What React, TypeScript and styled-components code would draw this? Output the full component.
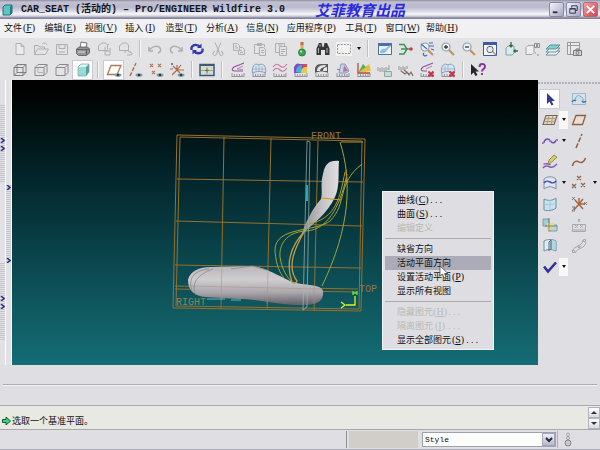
import React from "react";
import styled, { createGlobalStyle, css } from "styled-components";

const cjk = `"Liberation Serif", "Noto Sans CJK SC", serif`;
const mono = `"Liberation Mono", "Noto Sans CJK SC", monospace`;

const GlobalStyle = createGlobalStyle`
  *, *::before, *::after { box-sizing: border-box; }
  body { margin: 0; background: #dedee3; font-family: ${cjk}; font-size: 9px; color: #111; }
  button, select { font: inherit; color: inherit; margin: 0; }
`;

/* ---------- shell ---------- */

const Page = styled.div`
  display: flex;
  flex-direction: column;
  min-height: 100vh;
  background: #dedee3;
  border-bottom: 1px solid #a9a9bb;
`;

const TitleBar = styled.header`
  display: flex;
  align-items: center;
  height: 19px;
  padding: 0 2px 0 2px;
  background: linear-gradient(#8e8e9e 0, #c2c2d2 2px, #b9b9cc 7px, #cfcfdc 10px, #f6f6fa 14px, #d4d4e0 16px, #84849a 18px);
`;

const Title = styled.h1`
  margin: 0 0 0 8px;
  font: bold 10px/16px ${mono};
  color: #15151c;
  white-space: nowrap;
`;

const Brand = styled.span`
  margin-left: 30px;
  font: italic bold 15px/18px "Noto Sans CJK SC", sans-serif;
  color: #2a2ae0;
  white-space: nowrap;
`;

const WindowButtons = styled.div`
  display: flex;
  gap: 2px;
  margin-left: auto;
`;

const WindowButton = styled.button<{ $close?: boolean }>`
  width: 15px;
  height: 15px;
  padding: 0;
  border: 1px solid ${(p) => (p.$close ? "#b96a72" : "#8688a6")};
  border-radius: 2px;
  background: ${(p) =>
    p.$close ? "linear-gradient(135deg, #eda0a0, #cf4650)" : "linear-gradient(135deg, #f4f4fa, #a5a7c4)"};
  svg { display: block; width: 13px; height: 13px; }
`;

const MenuBar = styled.nav`
  background: #f1f1f3;
`;

const MenuItems = styled.div`
  display: flex;
  justify-content: space-between;
  max-width: 460px;
  height: 19px;
  padding: 0 2px 2px 4px;
`;

const MenuButton = styled.button`
  padding: 0;
  border: 0;
  background: none;
  line-height: 15px;
  white-space: nowrap;
`;

const Key = styled.span`
  display: inline-block;
  width: 14px;
  font-size: 10px;
  text-align: center;
`;

const Dots = styled.span`
  font: 8px ${mono};
`;

const ToolRow = styled.div`
  display: flex;
  align-items: center;
  height: 21px;
  padding-left: 9px;
  background: #e3e3e5;
`;

const ToolButton = styled.button<{ $on?: boolean; $dim?: boolean }>`
  display: flex;
  flex: none;
  align-items: center;
  justify-content: center;
  width: 21px;
  height: 20px;
  padding: 0;
  border: 0;
  background: none;
  svg { width: 16px; height: 16px; opacity: ${(p) => (p.$dim ? 0.6 : 0.88)}; }
  ${(p) => p.$on && css`background: #fff; box-shadow: inset 0 0 0 1px #c9c9d3;`}
`;

const Separator = styled.span<{ $w: number }>`
  flex: none;
  width: ${(p) => p.$w}px;
  height: 17px;
  background: linear-gradient(90deg, #c0c0c4 1px, #f7f7f7 1px, #f7f7f7 2px, transparent 2px) no-repeat 4px 0;
`;

const CaretButton = styled.button<{ $raised?: boolean }>`
  display: flex;
  flex: none;
  align-items: center;
  justify-content: center;
  width: 9px;
  height: 18px;
  padding: 0;
  border: 0;
  background: ${(p) => (p.$raised ? "#f7f7f5" : "none")};
  &::before {
    content: "";
    border: 2px solid transparent;
    border-top: 3px solid #111;
    border-bottom: 0;
  }
`;

/* ---------- work area ---------- */

const WorkArea = styled.main`
  display: flex;
  flex: 1 0 285px;
`;

const SashColumn = styled.div<{ $top: number }>`
  display: flex;
  flex-direction: column;
  gap: 80px;
  width: 6px;
  padding-top: ${(p) => p.$top}px;
  border-right: 1px solid #fbfbfd;
  background: #e1e1e6;
`;

const Sash = styled.button<{ $ends?: boolean }>`
  display: flex;
  flex-direction: column;
  align-items: center;
  justify-content: ${(p) => (p.$ends ? "space-between" : "center")};
  gap: 3px;
  width: 5px;
  height: 78px;
  padding: 0;
  border: 0;
  background: repeating-linear-gradient(#c2c2c8 0, #c2c2c8 1px, #e4e4e8 1px, #e4e4e8 2px);
  svg { width: 5px; height: 5px; }
`;

const Viewport = styled.section`
  position: relative;
  flex: 1;
  min-width: 0;
  background: linear-gradient(#000 0, #000604 7%, #02242a 33%, #0a454c 62%, #156d75 100%);
`;

const Model = styled.svg`
  display: block;
  width: 100%;
  height: 285px;
`;

const ContextMenu = styled.ul`
  position: absolute;
  top: 111px;
  left: 370px;
  width: 112px;
  margin: 0;
  padding: 1px 2px 2px;
  border: 1px solid #f3f3f6;
  background: #dedee2;
  list-style: none;
`;

const ContextItem = styled.button<{ $hot?: boolean }>`
  display: block;
  width: 100%;
  height: 14px;
  padding: 0 0 0 12px;
  border: 0;
  background: ${(p) => (p.$hot ? "#acacb9" : "none")};
  line-height: 14px;
  text-align: left;
  white-space: nowrap;
  &:disabled { color: #b9b9b2; }
`;

const ContextRule = styled.li`
  height: 1px;
  margin: 3px 0;
  background: #a9a9b0;
`;

const Pointer = styled.svg`
  position: absolute;
  top: 73px;
  left: 56px;
  width: 10px;
  height: 14px;
`;

const Palette = styled.aside`
  display: grid;
  grid-template-columns: 20px 9px 22px 9px;
  grid-auto-rows: 21px;
  align-content: start;
  align-items: center;
  width: 62px;
  padding: 8px 0 0 1px;
  background: radial-gradient(circle at 1px 1px, #b3b3bb 1px, transparent 1px) 0 2px / 3px 3px repeat-x #dedee3;
`;

const PaletteGap = styled.span``;

/* ---------- footer ---------- */

const Strip = styled.div`
  height: 41px;
  padding: 19px 3px 0;
  border-bottom: 1px solid #a8a8ae;
  &::before {
    content: "";
    display: block;
    height: 2px;
    border-top: 1px solid #adadb4;
    background: #f3f3f6;
  }
`;

const MessageRow = styled.div`
  display: flex;
  height: 24px;
  border-bottom: 1px solid #a8a8ae;
  background: #e8e9e3;
`;

const Message = styled.output`
  display: flex;
  flex: 1;
  align-items: center;
  padding: 7px 0 0 2px;
  font-size: 9px;
  line-height: 14px;
  svg { width: 9px; height: 10px; margin-right: 1px; }
`;

const Scroller = styled.div`
  display: flex;
  flex-direction: column;
  width: 12px;
  padding-top: 1px;
`;

const ScrollButton = styled.button<{ $up?: boolean }>`
  display: flex;
  align-items: center;
  justify-content: center;
  height: 11px;
  padding: 0;
  border: 1px solid #b3b3bf;
  background: linear-gradient(#fff, #d8d8e0);
  &::before {
    content: "";
    border: 3px solid transparent;
    ${(p) => (p.$up ? "border-bottom-color: #333; border-top: 0;" : "border-top-color: #333; border-bottom: 0;")}
  }
`;

const StatusRow = styled.footer`
  display: flex;
  height: 19px;
  padding: 1px 22px 1px 0;
`;

const StatusText = styled.div`
  flex: 1;
  border-right: 1px solid #8f8f98;
`;

const StatusBlock = styled.div`
  width: 69px;
  margin: 0 4px 0 2px;
  background: #d1cec9;
`;

const FilterBox = styled.label`
  position: relative;
  display: flex;
  width: 136px;
  padding: 1px 0;
  border-right: 1px solid #b0b0b8;
  select {
    flex: 1;
    width: 134px;
    margin-right: 1px;
    padding: 0 0 0 2px;
    appearance: none;
    border: 1px solid #9fa0ae;
    border-radius: 0;
    background: #fbfdfb;
    font: 8px/12px ${mono};
  }
`;

const FilterArrow = styled.span`
  position: absolute;
  top: 2px;
  right: 2px;
  display: flex;
  align-items: center;
  justify-content: center;
  width: 13px;
  height: 13px;
  border: 1px solid #a5a7bd;
  background: linear-gradient(#eeeef5, #b7b8cb);
  pointer-events: none;
  svg { width: 8px; height: 6px; }
`;

const Lamp = styled.svg`
  width: 8px;
  height: 15px;
  margin: 1px 6px 0 6px;
`;

/* ---------- icons, drawn on a 16 x 16 grid ---------- */

const G = "#8d8d91";
const ruler = <path d="M1.500 14.500h13M2 14v-3M4.500 14v-2M7 14v-2M9.500 14v-2M12 14v-2M14 14v-3" stroke="#8c8c92" fill="none" />;
const eye = (
  <g>
    <ellipse cx="12" cy="13" rx="3.5" ry="1.8" fill="#71969c" />
    <circle cx="12" cy="13" r="1.3" fill="#123" />
  </g>
);
const lens = (
  <g>
    <path d="M9 9l5 5" stroke="#c08a4c" strokeWidth="2.2" />
    <circle cx="6" cy="6" r="4" fill="#eef5fb" stroke="#8a94a2" strokeWidth="1.2" />
  </g>
);
const redX = <path d="M9.500 9.500l5 5M14.500 9.500l-5 5" stroke="#c2182c" strokeWidth="1.800" />;

const icons: Record<string, React.ReactNode> = {
  new: <path d="M4 2.5h5l3 3v8H4zM9 2.5v3h3" fill="#f2f2f4" stroke={G} />,
  open: <path d="M1.5 13.500V4.500h4l1 1.500h5v2M1.500 13.500l3-5.500h11l-3 5.500zM9 3c2-2 4-1 5 1" fill="none" stroke={G} />,
  save: <path d="M2.500 3.500h11v10h-11zM5 3.500v4h6v-4M5 11h6" fill="none" stroke={G} />,
  print: (
    <g stroke="#444" strokeWidth=".8">
      <path d="M5 7l1-6 6 1-1 5z" fill="#fff" />
      <path d="M1.500 8l3-2h8l2 2v4l-3 2.500h-8l-2-2z" fill="#8b8b90" />
      <path d="M2 8.500h9.500v5M11.500 8.500l3-.5" fill="none" />
      <path d="M3 11h7" stroke="#eee" />
    </g>
  ),
  mail: <path d="M2.500 9.500V5l3-3h4l2 2v5.500zM9 6v8h5V7M9 10h5M11 4l2-1" fill="none" stroke={G} />,
  link: <path d="M2.500 9.500V5l3-3h4l2 2v5.500zM8 12a2 2 0 0 1 4-1h2M10 14h3a2 1.500 0 0 0 0-3" fill="none" stroke={G} />,
  undo: <path d="M2 6v4h4M2.500 9.500C5 4.500 12 4 13.500 8c.7 2-.8 3.500-2.500 4" fill="none" stroke={G} strokeWidth="1.500" />,
  redo: <path d="M14 6v4h-4M13.500 9.500C11 4.500 4 4 2.500 8c-.7 2 .8 3.500 2.500 4" fill="none" stroke={G} strokeWidth="1.500" />,
  regen: (
    <g fill="none" stroke="#1a21a8" strokeWidth="2.300">
      <path d="M2.500 9V6.500C4 3 9 3 11 6M13.500 7.500V10C12 13 7 13 5 10" />
      <path d="M12.500 2.500V7H8zM3.500 13.500V9H8z" fill="#1a21a8" stroke="none" />
    </g>
  ),
  cut: <path d="M5 1.500l4 9M11 1.500l-4 9M5 10.500a1.800 2 0 1 0 1.500 2.500l1-3M11 10.500a1.800 2 0 1 1-1.500 2.500l-1-3" fill="none" stroke={G} />,
  copy: <path d="M2.500 2.500h4l2 2v5h-6zM8.500 6.500h3l2 2v5h-6v-4M4 5h2M4 7h3M9 9.500h2M9 11.500h3" fill="none" stroke={G} />,
  paste: <path d="M7 12.500H2.500v-9h10V6M5.500 4.500v-2h4v2zM7.500 6.500h4l2 2v6h-6zM9 9.500h3M9 11.500h3" fill="none" stroke={G} />,
  pasteSp: <path d="M6 11.500H2.500v-9h9V5M5 4h4M6.500 5.500h7v9h-7zM8 8.500h4M8 10.500h4M8 12.500h2" fill="none" stroke={G} />,
  lamp: (
    <g>
      <path d="M6.500 1h3v9h-3z" fill="#d8a65d" />
      <path d="M6.500 1h3v3h-3z" fill="#c85a28" />
      <circle cx="8" cy="11.500" r="3.500" fill="#22a03d" stroke="#127027" />
      <circle cx="7" cy="10.500" r="1.100" fill="#b2f0b8" />
    </g>
  ),
  find: (
    <g>
      <path d="M1.500 14V7.500L4 2h2.500l1 4h1l1-4H12l2.500 5.500V14H10V9H6v5z" fill="#202023" />
      <path d="M3.500 7v5M12 7v5M5 3.500v2" stroke="#a5b3a8" />
    </g>
  ),
  select: (
    <g>
      <path d="M0 1h16v14H0z" fill="#f5f5f3" />
      <path d="M1.500 3.500h13v9h-13z" fill="none" stroke="#8c8c91" strokeDasharray="2 1.200" />
    </g>
  ),
  repaint: (
    <g>
      <path d="M1.500 2.500h13v11h-13z" fill="#f4f8fc" stroke="#2c64a8" />
      <path d="M1 2h14v3H1z" fill="#2f63ac" />
      <path d="M3 12c0-3 2-5 5-4l5-4 1 1-4 4c0 2-3 4-7 3z" fill="#88bce0" />
    </g>
  ),
  spin: (
    <g fill="none">
      <path d="M1 3.500h5l3 4.500-3 5H1M3 8h6" stroke="#238b46" strokeWidth="1.500" />
      <path d="M9 8h4" stroke="#333" />
      <circle cx="13" cy="8" r="1.800" fill="#d3252d" />
    </g>
  ),
  orient: (
    <g>
      {lens}
      <path d="M10 2h4M10 5h5M12 8l3 1M5 12c-2 2 1 4 3 2M2 3l6 5" stroke="#2b58b8" strokeWidth="1.200" fill="none" />
    </g>
  ),
  zoomIn: <g>{lens}<path d="M4 6h4M6 4v4" stroke="#222" strokeWidth="1.300" /></g>,
  zoomOut: <g>{lens}<path d="M4 6h4" stroke="#222" strokeWidth="1.300" /></g>,
  refit: (
    <g>
      <path d="M1.500 1.500h13v13h-13z" fill="#f4f8f8" stroke="#264a96" />
      <path d="M1 1h14v3H1z" fill="#264a96" />
      <path d="M10 10l4 4" stroke="#c08a4c" strokeWidth="1.600" />
      <circle cx="8" cy="8.500" r="3.200" fill="#e4f0f4" stroke="#556" />
    </g>
  ),
  reorient: (
    <g>
      <path d="M3 7l2-2h6v7l-2 2H3z" fill="#d6efec" stroke="#7a9c98" />
      <path d="M8 1v5M6.500 4L8 6l1.500-2M15 10h-4M12.500 8.500L11 10l1.500 1.500" stroke="#175e35" strokeWidth="1.300" fill="none" />
    </g>
  ),
  views: (
    <g fill="none">
      <path d="M2 6.500l2-2h6v7l-2 2H2z" fill="#eef2f0" stroke="#9a9a9e" />
      <path d="M10.500 2.500h2v4h-2zM13.500 2.500h2v4h-2zM11 12h1M13 14h2" stroke="#6c6c71" strokeWidth=".8" />
    </g>
  ),
  layers: (
    <g stroke="#4b7d84" strokeWidth=".9">
      <path d="M1 14l4-4h10l-4 4z" fill="#f4f4f0" />
      <path d="M1 11l4-4h10l-4 4z" fill="#f0f4f0" />
      <path d="M1 8l4-4h10l-4 4z" fill="#6fd0d4" />
    </g>
  ),
  viewMgr: (
    <g fill="none" stroke="#68686d">
      <path d="M1.500 1.500h12v12h-12zM4.500 1.500v12M1.500 4.500h12" fill="#ececee" stroke="#8f8f94" />
      <path d="M7.500 9.500h8v5h-8zM10 9v-1h3v1" fill="#d6d6da" />
      <circle cx="11.500" cy="12" r="1.500" />
    </g>
  ),
  wire: <path d="M2 5.500l3-3h9v8l-3 3H2zM2 5.500h9v8M11 5.500l3-3M5 2.500v8h9M5 10.500l-3 3" fill="none" stroke="#707074" />,
  hidden: (
    <g fill="none" stroke="#808084">
      <path d="M2 5.500l3-3h9v8l-3 3H2zM2 5.500h9v8M11 5.500l3-3" />
      <path d="M5 6v4.500h5" stroke="#b0b0b4" />
    </g>
  ),
  noHidden: <path d="M2 5.500l3-3h9v8l-3 3H2zM2 5.500h9v8M11 5.500l3-3" fill="none" stroke="#808084" />,
  shaded: (
    <g>
      <path d="M3 5l3-3h8l-3 3z" fill="#d7f3f0" />
      <path d="M3 5h8v9H3z" fill="#8fd6d2" />
      <path d="M11 5l3-3v8l-3 4z" fill="#3b9493" />
      <path d="M3 5l3-3h8v8l-3 4H3z" fill="none" stroke="#5b9998" strokeWidth=".7" />
    </g>
  ),
  planeEye: <g><path d="M1.500 12.500L5 3.500h10l-4 9z" fill="none" stroke="#a1673f" strokeWidth="1.300" />{eye}</g>,
  axisEye: <g><path d="M3 14L9 1" stroke="#b0592f" strokeWidth="1.400" strokeDasharray="4 1.500" />{eye}</g>,
  pointEye: (
    <g>
      <path d="M2 2l3 3M5 2L2 5M10 2l3 3M13 2l-3 3M4 9l3 3M7 9l-3 3" stroke="#b0694c" strokeWidth="1.200" />
      {eye}
    </g>
  ),
  csysEye: (
    <g>
      <path d="M8 8V3M8 8l-5 5M8 8h7M4 4l7 7M12 3L8 8" stroke="#a55d34" strokeWidth="1.200" />
      <path d="M2 1l2 2M4 1L2 3M1 7h3" stroke="#555" strokeWidth=".8" />
      {eye}
    </g>
  ),
  grid: (
    <g>
      <path d="M1 2.500h14v11H1z" fill="#d3dcc6" stroke="#27476c" strokeWidth="1.500" />
      <path d="M1 3h14" stroke="#27476c" strokeWidth="2" />
      <path d="M8 5v8M2 8.500h12" stroke="#8fa08c" />
      <path d="M6 8.500h4M8 6.500v4" stroke="#4c6a4d" />
    </g>
  ),
  curvature: (
    <g>
      {ruler}
      <path d="M14 1L4 5c-3 2-2 4 1 4h8" stroke="#8a3a9c" fill="none" strokeWidth="1.100" />
      <path d="M13 4L7 7l6 .5" stroke="#b06e9c" fill="none" strokeWidth=".9" />
    </g>
  ),
  section: (
    <g>
      {ruler}
      <path d="M1.500 11c-1-9 4-10 6.500-8 2-2 8-1 6.500 8-4-2-9-2-13 0z" fill="#d6e4f0" stroke="#7c98b8" />
      <path d="M5 4v6M11 4v6M8 3v6M2 7h12" stroke="#90a8c4" strokeWidth=".8" />
    </g>
  ),
  offset: (
    <g>
      {ruler}
      <path d="M1 5c3-4 5-3 7-1s4 2 7-2M1 9c3-4 5-3 7-1s4 2 7-2" stroke="#c06aa2" fill="none" strokeWidth="1.100" />
    </g>
  ),
  gauss: (
    <g>
      {ruler}
      <path d="M1 11V5c2-4 4-4 6-3h7v9z" fill="#7a35b8" />
      <path d="M3 10c0-5 3-7 6-7l-1 8z" fill="#2da9de" />
      <path d="M8 11c0-5 2-6 6-6v6z" fill="#e9c72c" />
      <path d="M9 2h5v3c-2 0-4 0-5-3z" fill="#da3a3a" />
    </g>
  ),
  reflect: (
    <g>
      {ruler}
      <path d="M1 11V6c2-5 5-4 13-4v9c-4-2-9-2-13 0z" fill="#48484c" />
      <path d="M3 9c0-5 4-6 9-6-2 4-5 1-6 6zM9 9c0-3 2-4 4-4v4z" fill="#e6e6ea" />
    </g>
  ),
  draft: (
    <g>
      {ruler}
      <path d="M4 11l2-9h4l4 7-3 2z" fill="#c6d4ea" stroke="#6a79a8" strokeWidth=".8" />
      <path d="M8 10l1-7 4 6z" fill="#b9648c" />
      <path d="M2 7l3 1" stroke="#4670b4" />
    </g>
  ),
  slope: (
    <g>
      {ruler}
      <path d="M2 11L13 2l2 7z" fill="#e8b82c" />
      <path d="M2 11l5-9 3 3z" fill="#41a85a" />
      <path d="M2 1v10h12" stroke="#b8342c" strokeWidth="1.300" fill="none" />
    </g>
  ),
  dihedral: (
    <g fill="none" stroke="#8c8c91">
      <path d="M1 5v4M3 6v4M5 5v5M7 6v4M9 5v4M11 6v2" />
      <path d="M7.500 9.500h7v5h-7zM12 3v5" fill="#c4dcd4" stroke="#82a096" />
    </g>
  ),
  distance: (
    <g>
      <path d="M1 4v4M3 5v4M5 4v4M7 5v3M9 4v3" stroke="#8c8c92" />
      <path d="M3 9l4 3 2-2 2 3 2-3 2 4M6 8l5 4" stroke="#6c5a52" strokeWidth="1.100" fill="none" />
    </g>
  ),
  delCurv: (
    <g>
      {ruler}
      <path d="M14 1L4 5c-3 2-2 4 1 4h3" stroke="#8a3a9c" fill="none" strokeWidth="1.100" />
      <path d="M13 4L7 7" stroke="#b06e9c" />
      {redX}
    </g>
  ),
  delSect: (
    <g>
      {ruler}
      <path d="M1.500 11c-1-9 4-10 6.500-8 2-2 8-1 6.500 8-4-2-9-2-13 0z" fill="#d6e4f0" stroke="#7c98b8" />
      <path d="M5 4v6M8 3v6M2 7h12" stroke="#90a8c4" strokeWidth=".8" />
      {redX}
    </g>
  ),
  help: (
    <g>
      <path d="M1 2v11l2.500-2.500L5.500 14l2-1-2-3.500H9z" fill="#0d0d14" />
      <path d="M9.500 5c0-4 5.500-4 5.500-.5C15 7 12 7 12 9.500M12 11v2" stroke="#7d1f93" strokeWidth="2" fill="none" />
    </g>
  ),
  arrow: <path d="M5 2v11l2.500-2.500L9.500 14.500l2-1-2-3.500H13z" fill="#1b1c86" />,
  internal: (
    <g fill="none">
      <path d="M1.500 2.500h13v11h-13z" stroke="#3f8bc4" strokeDasharray="1 1" />
      <path d="M4 10c0-5 3-6 5-5s4 3 3 5" fill="#c4def0" stroke="#6aa4cc" />
      <path d="M1 11c1-2 3-2 4-1M11 10c1 2 3 1 4 0" stroke="#236aa8" strokeWidth="1.500" />
    </g>
  ),
  activePlane: (
    <g fill="none">
      <path d="M1 12.500L4 3.500h11l-3 9z" fill="#e4d8b8" stroke="#6a5a48" strokeWidth="1.200" />
      <path d="M3 9.500h10M4 6.500h10M7 4L5 12M11 4L9 12" stroke="#a09478" />
    </g>
  ),
  plane: <path d="M1.500 12.500L5 3.500h9.500l-3 9z" fill="#eadfd4" stroke="#85522f" strokeWidth="1.300" />,
  curve: (
    <g>
      <path d="M1.500 10c2-5 5-5 7-2s4 2 6-1" stroke="#5a3fb0" strokeWidth="1.500" fill="none" />
      <path d="M0 9h2v2H0zM7 7h2v2H7zM14 6h2v2h-2z" fill="#a46ac0" />
    </g>
  ),
  axis: <path d="M5 15L11 1" stroke="#85522f" strokeWidth="1.500" strokeDasharray="5 1.500" />,
  editCurve: (
    <g>
      <path d="M1.500 10c2 0 5-1 7 1M1 14c2-3 5-2 7-1s4 0 7-3" stroke="#7a4ab0" strokeWidth="1.400" fill="none" />
      <path d="M6 10L7 6l5-5 3 2-5 5z" fill="#d2cc44" stroke="#74743c" strokeWidth=".8" />
    </g>
  ),
  datumCurve: <path d="M1.500 12c1-6 5-5 6.500-4s5 1 6.500-4" stroke="#85522f" strokeWidth="1.500" fill="none" />,
  cos: (
    <g fill="none">
      <path d="M2 4c4-3 8-3 12 0v10c-4-3-8-3-12 0z" fill="#dce9f2" stroke="#6f8799" />
      <path d="M2 8c2-3 4-2 6-1s4 2 6-1" stroke="#3a2fae" strokeWidth="1.500" />
    </g>
  ),
  points: <path d="M6 1l4 4M10 1L6 5M1 9l4 4M5 9l-4 4M10 8l4 4M14 8l-4 4" stroke="#85522f" strokeWidth="1.200" />,
  surface: (
    <g fill="none">
      <path d="M2 3c4 2 8 2 12-1v10c-4 3-8 3-12 2z" fill="#c4e4f2" stroke="#5f8299" />
      <path d="M8 4v10M2 8c4 1 8 1 12-1" stroke="#9cc8dc" />
    </g>
  ),
  csys: (
    <g>
      <path d="M8 8V2M8 8h6M8 8l-5 6M4 4l8 9M12 3L8 8" stroke="#a05326" strokeWidth="1.400" />
      <path d="M1 1l3 3M4 1L1 4M13 6l3 3M16 6l-3 3M1 11h3l-3 4h3" stroke="#555" strokeWidth=".8" fill="none" />
    </g>
  ),
  connect: (
    <g>
      <path d="M1 2h6v7H1z" fill="#9dc8dc" stroke="#5f8299" strokeWidth=".8" />
      <path d="M8 8h7v6H8z" fill="#b3d2dc" stroke="#5f8299" strokeWidth=".8" />
      <path d="M5 6h7v3H9v4H5z" fill="#e5df74" />
      <path d="M7 1v14M3 9h12" stroke="#666b4c" strokeWidth=".8" />
    </g>
  ),
  analysis: (
    <g fill="none" stroke="#a2a2a6">
      <path d="M1.500 14.500v-7h13v7zM3 14v-2M5 14v-2M7 14v-2M9 14v-2M11 14v-2M13 14v-2" />
      <path d="M7 2l2 3M9 2L7 5M4 8l3 3M7 8l-3 3M9 8l3 3M12 8l-3 3" />
    </g>
  ),
  trim: (
    <g fill="none">
      <path d="M2 3c4-2 8-2 12 0v10c-4-2-8-2-12 0z" fill="#e7eff2" stroke="#5f8299" />
      <path d="M8 2c2 0 4 .3 5.500 1.200v9C12 11.500 10 11 8 11.500z" fill="#a9d4e8" />
      <path d="M7 13V4l2-2v10" stroke="#36506c" />
    </g>
  ),
  chain: (
    <g fill="none" stroke="#a0a0a4">
      <path d="M1 13c3-6 10-4 11-11M4 15c3-6 10-4 11-11" />
      <path d="M1.500 12.500h2v2h-2zM7 7.500h2v2H7zM12.500 1.500h2v2h-2z" />
    </g>
  ),
  check: <path d="M2 7.500l4 5 8-9" stroke="#1c1a8c" strokeWidth="2.600" fill="none" />,
};

const Icon = ({ name }: { name: string }) => (
  <svg viewBox="0 0 16 16" aria-hidden="true">{icons[name]}</svg>
);

/* ---------- data ---------- */

const menus: [string, string][] = [
  ["文件", "F"], ["编辑", "E"], ["视图", "V"], ["插入", "I"], ["造型", "T"], ["分析", "A"],
  ["信息", "N"], ["应用程序", "P"], ["工具", "T"], ["窗口", "W"], ["帮助", "H"],
];

type Tool = { id: string; on?: boolean; dim?: boolean } | { gap: number } | { caret: true };
const t = (ids: string, extra = {}): Tool[] => ids.split(" ").map((id) => ({ id, ...extra }));

const fileTools: Tool[] = [
  ...t("new open save", { dim: true }), ...t("print"), ...t("mail link", { dim: true }), { gap: 9 },
  ...t("undo redo", { dim: true }), ...t("regen"), ...t("cut copy paste pasteSp", { dim: true }),
  ...t("lamp find select"), { caret: true }, { gap: 11 },
  ...t("repaint spin orient zoomIn zoomOut refit reorient views layers viewMgr"),
];

const viewTools: Tool[] = [
  ...t("wire hidden noHidden"), ...t("shaded", { on: true }), { gap: 10 },
  ...t("planeEye", { on: true }), ...t("axisEye pointEye csysEye"), { gap: 9 },
  ...t("grid"), { gap: 10 },
  ...t("curvature section offset gauss reflect draft slope dihedral distance delCurv delSect"), { gap: 9 },
  ...t("help"),
];

type PaletteRow = { left: string; leftCaret?: "flat" | "raised"; right?: string; rightCaret?: boolean };
const paletteRows: PaletteRow[] = [
  { left: "arrow", right: "internal" },
  { left: "activePlane", leftCaret: "raised", right: "plane" },
  { left: "curve", leftCaret: "flat", right: "axis" },
  { left: "editCurve", right: "datumCurve" },
  { left: "cos", leftCaret: "flat", right: "points", rightCaret: true },
  { left: "surface", right: "csys" },
  { left: "connect", right: "analysis" },
  { left: "trim", right: "chain" },
  { left: "check", leftCaret: "raised" },
];

type Entry = { label: string; k?: string; dots?: boolean; off?: boolean; hot?: boolean } | null;
const contextEntries: Entry[] = [
  { label: "曲线", k: "C", dots: true },
  { label: "曲面", k: "S", dots: true },
  { label: "编辑定义", off: true },
  null,
  { label: "缺省方向" },
  { label: "活动平面方向", hot: true },
  { label: "设置活动平面", k: "P" },
  { label: "显示所有视图" },
  null,
  { label: "隐藏图元", k: "H", dots: true, off: true },
  { label: "隔离图元", k: "I", dots: true, off: true },
  { label: "显示全部图元", k: "S", dots: true },
];

/* ---------- parts ---------- */

const Mnemonic = ({ k }: { k: string }) => <Key>(<u>{k}</u>)</Key>;

const Tools = ({ items, label }: { items: Tool[]; label: string }) => (
  <ToolRow role="toolbar" aria-label={label}>
    {items.map((item, i) =>
      "gap" in item ? (
        <Separator key={i} $w={item.gap} />
      ) : "caret" in item ? (
        <CaretButton key={i} aria-label="more" />
      ) : (
        <ToolButton key={i} $on={item.on} $dim={item.dim} aria-label={item.id}>
          <Icon name={item.id} />
        </ToolButton>
      )
    )}
  </ToolRow>
);

const Chevron = () => (
  <svg viewBox="0 0 5 5" aria-hidden="true"><path d="M1 0l3 2.500L1 5" fill="none" stroke="#2b2b8c" strokeWidth="1.500" /></svg>
);

const SeatModel = () => (
  <Model viewBox="12 80 526 285" role="img" aria-label="CAR_SEAT">
    <defs>
      <linearGradient id="cushion" x1="0" y1="0" x2="0" y2="1">
        <stop offset="0" stopColor="#b9b5b9" />
        <stop offset=".35" stopColor="#d0cdd1" />
        <stop offset=".68" stopColor="#aaa6ac" />
        <stop offset="1" stopColor="#605e66" />
      </linearGradient>
      <linearGradient id="back" x1="0" y1="0" x2="1" y2="0">
        <stop offset="0" stopColor="#8b878b" />
        <stop offset=".55" stopColor="#c6c3c7" />
        <stop offset="1" stopColor="#e1dfe2" />
      </linearGradient>
    </defs>
    <g fill="none" stroke="#96702f" strokeWidth="1">
      <path d="M177 135L365 139L361 311L173 308ZM180 137L362 141L359 309L176 306Z" />
      <path d="M224 137L221 309M271 138L267 310M318 141L314 311" />
      <path d="M177 179L363 182M176 221L362 226M175 265L361 268M175 286L358 289M175 289L357 292" />
    </g>
    <path
      d="M188 280C190 271 199 267 211 267L252 266C266 268 277 275 290 281C300 286 321 283 323 291C324 300 319 305 305 305C282 306 262 299 238 299L205 297C195 296 188 291 188 280Z"
      fill="url(#cushion)"
    />
    <path d="M192 291C187 277 196 270 209 269M196 295C190 284 198 274 213 269M231 269L252 266L267 270" fill="none" stroke="#8b868c" strokeWidth=".8" />
    <path d="M339 161C329 160 325 164 323 174C320 184 323 192 321 199C312 209 306 222 301 235C312 225 328 213 335 197C340 187 338 172 339 161Z" fill="url(#back)" />
    <path d="M222 268L221 299M268 272L267 304M314 286L314 304M190 286L321 289" stroke="#a8947a" strokeWidth=".8" opacity=".65" />
    <g fill="none" stroke="#a3a536" strokeWidth="1">
      <path d="M340 142C352 180 351 226 322 286" />
      <path d="M362 164C336 184 348 203 330 221C317 232 275 226 275 250C276 268 282 276 285 279" />
      <path d="M347 174C342 200 330 230 306 231C285 232 279 246 280 257C282 270 287 277 292 282" />
      <path d="M345 172C340 196 337 219 308 224" stroke="#b39a28" />
    </g>
    <path d="M304 232C292 245 285 262 292 282C293 284 297 283 297 281C286 266 295 248 305 230" fill="none" stroke="#c49c45" strokeWidth="1.300" />
    <path d="M322 198L341 200" stroke="#d6942a" />
    <g fill="none" stroke="#9db7b8" strokeWidth=".9" opacity=".8">
      <path d="M307 141L303 310M310 142L307 307M303 310L307 307M307 141L310 142" />
    </g>
    <path d="M306 185h2v16h-2z" fill="#25aab5" />
    <path d="M341 142L363 142M346 170L347 183" stroke="#b88f32" />
    <g fill="none" stroke="#d6f52d" strokeWidth="1.300">
      <path d="M346 305h9v-9M341 302l4 3-4 3" />
      <path d="M353 291v4M357 291v4M353 293h4" stroke="#5ff03f" />
    </g>
    <path d="M207 299h18M231 300h10" stroke="#58b9cf" />
    <g fill="#96763e" fontFamily='"Liberation Mono", monospace' fontSize="10">
      <text x="311" y="139">FRONT</text>
      <text x="176" y="305" fill="#8b8358">RIGHT</text>
      <text x="359" y="292">TOP</text>
    </g>
  </Model>
);

export default function App() {
  return (
    <>
      <GlobalStyle />
      <Page lang="zh-CN">
        <TitleBar>
          <svg width="11" height="12" viewBox="0 0 11 12" aria-hidden="true">
            <path d="M1 3l2-2h7v8l-2 2H1z" fill="#5cc5c3" stroke="#2b6f78" />
            <path d="M8 3l2-2v8l-2 2z" fill="#237c80" />
          </svg>
          <Title>CAR_SEAT (活动的) – Pro/ENGINEER Wildfire 3.0</Title>
          <Brand>艾菲教育出品</Brand>
          <WindowButtons>
            <WindowButton aria-label="minimize">
              <svg viewBox="0 0 14 14"><path d="M3 10h5" stroke="#333348" strokeWidth="2" /></svg>
            </WindowButton>
            <WindowButton aria-label="restore">
              <svg viewBox="0 0 14 14"><path d="M5 5V3h6v5H9M3 6h6v5H3zM3 6.500h6" fill="none" stroke="#333348" /></svg>
            </WindowButton>
            <WindowButton $close aria-label="close">
              <svg viewBox="0 0 14 14"><path d="M3 3l8 8M11 3l-8 8" stroke="#fff" strokeWidth="2" /></svg>
            </WindowButton>
          </WindowButtons>
        </TitleBar>

        <MenuBar>
          <MenuItems>
            {menus.map(([label, k]) => (
              <MenuButton key={label}>{label}<Mnemonic k={k} /></MenuButton>
            ))}
          </MenuItems>
        </MenuBar>
        <Tools items={fileTools} label="file" />
        <Tools items={viewTools} label="view" />

        <WorkArea>
          <SashColumn $top={25}>
            <Sash aria-label="panel"><Chevron /><Chevron /></Sash>
            <Sash aria-label="panel"><Chevron /><Chevron /></Sash>
          </SashColumn>
          <SashColumn $top={105}>
            <Sash $ends aria-label="panel"><Chevron /><Chevron /></Sash>
          </SashColumn>
          <Viewport>
            <SeatModel />
            <ContextMenu role="menu">
              {contextEntries.map((e, i) =>
                e ? (
                  <li key={i} role="none">
                    <ContextItem role="menuitem" $hot={e.hot} disabled={e.off}>
                      {e.label}
                      {e.k && <Mnemonic k={e.k} />}
                      {e.dots && <Dots>...</Dots>}
                    </ContextItem>
                  </li>
                ) : (
                  <ContextRule key={i} role="separator" />
                )
              )}
              <Pointer viewBox="0 0 10 14" aria-hidden="true">
                <path d="M1 1v10l2.500-2L5 13l2-1-1.500-3.500H9z" fill="#fff" stroke="#44444c" strokeWidth=".8" />
              </Pointer>
            </ContextMenu>
          </Viewport>
          <Palette>
            {paletteRows.map((r, i) => (
              <React.Fragment key={r.left}>
                <ToolButton $on={i === 0} aria-label={r.left}><Icon name={r.left} /></ToolButton>
                {r.leftCaret ? <CaretButton $raised={r.leftCaret === "raised"} aria-label="more" /> : <PaletteGap />}
                {r.right ? (
                  <ToolButton aria-label={r.right}><Icon name={r.right} /></ToolButton>
                ) : (
                  <PaletteGap />
                )}
                {r.rightCaret ? <CaretButton aria-label="more" /> : <PaletteGap />}
              </React.Fragment>
            ))}
          </Palette>
        </WorkArea>

        <Strip />
        <MessageRow>
          <Message>
            <svg viewBox="0 0 9 10" aria-hidden="true">
              <path d="M.5 3.500h3.500V1l4.500 4L4 9V6.500H.5z" fill="#38d67a" stroke="#14582f" />
            </svg>
            选取一个基准平面。
          </Message>
          <Scroller>
            <ScrollButton $up aria-label="scroll up" />
            <ScrollButton aria-label="scroll down" />
          </Scroller>
        </MessageRow>
        <StatusRow>
          <StatusText />
          <StatusBlock />
          <FilterBox>
            <select aria-label="filter" defaultValue="Style">
              <option>Style</option>
            </select>
            <FilterArrow>
              <svg viewBox="0 0 8 6" aria-hidden="true"><path d="M1 1l3 3 3-3" fill="none" stroke="#25253c" strokeWidth="2" /></svg>
            </FilterArrow>
          </FilterBox>
          <Lamp viewBox="0 0 8 15" aria-hidden="true">
            <circle cx="4" cy="2.500" r="1.500" fill="none" stroke="#a5a5aa" />
            <circle cx="4" cy="6" r="1.500" fill="none" stroke="#a5a5aa" />
            <circle cx="4" cy="11" r="3" fill="#c9c9cd" stroke="#85858a" />
          </Lamp>
        </StatusRow>
      </Page>
    </>
  );
}
